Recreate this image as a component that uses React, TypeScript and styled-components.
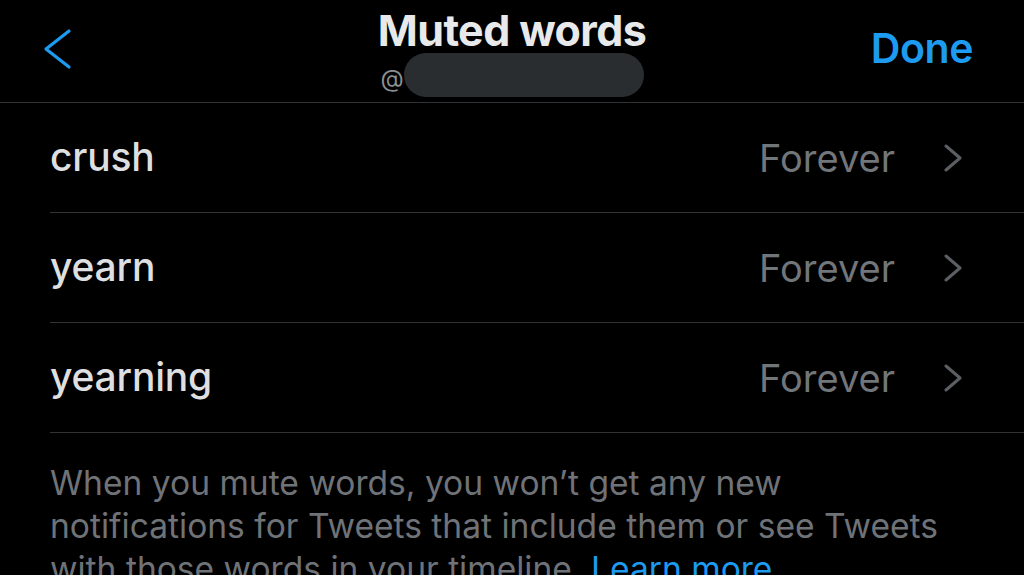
import React from 'react'
import styled, { createGlobalStyle } from 'styled-components'

const Global = createGlobalStyle`
  html, body {
    margin: 0;
    padding: 0;
    background: #000;
  }
  body {
    font-family: Inter, "Open Sans", "Liberation Sans", sans-serif;
    -webkit-font-smoothing: antialiased;
  }
`

const Screen = styled.div`
  width: 1024px;
  height: 575px;
  overflow: hidden;
  background: #000;
  color: #e7e9ea;
`

const Header = styled.div`
  height: 103px;
  border-bottom: 1px solid #2f3336;
  display: grid;
  grid-template-columns: 1fr auto 1fr;
  align-items: start;
  box-sizing: border-box;
`

const Back = styled.div`
  padding: 28px 0 0 42px;
  svg { display: block; }
`

const TitleBlock = styled.div`
  display: flex;
  flex-direction: column;
  align-items: center;
  padding-top: 6px;
  h1 {
    margin: 0;
    font-size: 43px;
    line-height: 48px;
    font-weight: 700;
    letter-spacing: -0.6px;
    color: #e7e9ea;
  }
`

const Handle = styled.div`
  display: flex;
  align-items: center;
  margin-top: -1px;
  margin-left: 0px;
  span {
    font-size: 24px;
    color: #8b8f93;
    margin-top: 6px;
  }
`

const Redacted = styled.div`
  width: 240px;
  height: 44px;
  border-radius: 22px;
  background: #2a2d30;
`

const Done = styled.div`
  justify-self: end;
  padding: 25px 51px 0 0;
  font-size: 41px;
  line-height: 46px;
  font-weight: 600;
  color: #1d9bf0;
  letter-spacing: -0.4px;
`

const List = styled.div`
  margin-left: 50px;
`

const Row = styled.div`
  height: 110px;
  box-sizing: border-box;
  border-bottom: 1px solid #2f3336;
  display: flex;
  align-items: center;
  padding-right: 62px;
`

const Word = styled.div`
  flex: 1;
  font-size: 39px;
  font-weight: 500;
  color: #dedfe0;
  letter-spacing: -0.2px;
  margin-top: -2px;
`

const Duration = styled.div`
  font-size: 38px;
  color: #71767b;
  margin-right: 49px;
`

const Note = styled.p`
  margin: 0;
  padding: 28px 54px 0 50px;
  font-size: 33.6px;
  line-height: 43px;
  color: #6f7378;
  a {
    color: #1d9bf0;
    text-decoration: none;
  }
`

const BackChevron = () => (
  <svg width="30" height="42" viewBox="0 0 30 42" fill="none">
    <path d="M27 3 L4 21 L27 39" stroke="#1d9bf0" strokeWidth="3.2" strokeLinecap="round" strokeLinejoin="round" />
  </svg>
)

const RightChevron = () => (
  <svg width="18" height="28" viewBox="0 0 18 28" fill="none">
    <path d="M2 2 L16 14 L2 26" stroke="#5b5f63" strokeWidth="3" strokeLinecap="round" strokeLinejoin="round" />
  </svg>
)

const words = ['crush', 'yearn', 'yearning']

export default function App() {
  return (
    <Screen>
      <Global />
      <Header>
        <Back>
          <BackChevron />
        </Back>
        <TitleBlock>
          <h1>Muted words</h1>
          <Handle>
            <span>@</span>
            <Redacted />
          </Handle>
        </TitleBlock>
        <Done>Done</Done>
      </Header>
      <List>
        {words.map((w) => (
          <Row key={w}>
            <Word>{w}</Word>
            <Duration>Forever</Duration>
            <RightChevron />
          </Row>
        ))}
      </List>
      <Note>
        When you mute words, you won’t get any new notifications for Tweets that include them or see Tweets with those words in your timeline. <a>Learn more</a>
      </Note>
    </Screen>
  )
}
